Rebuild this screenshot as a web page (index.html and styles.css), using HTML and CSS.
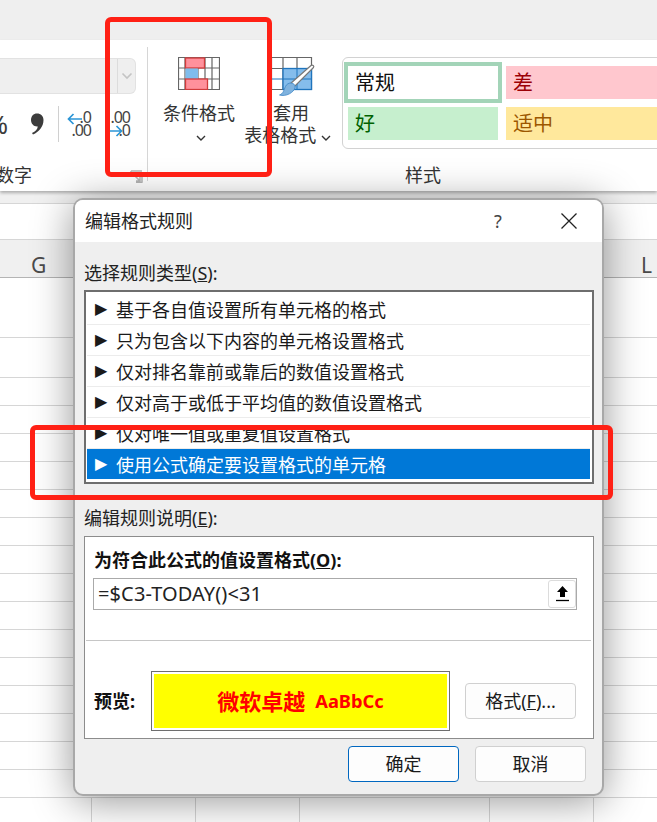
FILE: index.html
```html
<!DOCTYPE html>
<html lang="zh-CN">
<head>
<meta charset="utf-8">
<title>编辑格式规则</title>
<link rel="stylesheet" href="styles.css">
</head>
<body>
<main class="app">
  <div class="topband"></div>
  <section class="ribbon">
    <div class="group-number">
      <div class="combo">
        <span class="combo-arrow">
          <svg width="12" height="8" viewBox="0 0 12 8"><path d="M1.5 1.5 6 6l4.5-4.5" fill="none" stroke="#c4c4c4" stroke-width="1.6"/></svg>
        </span>
      </div>
      <div class="tools">
        <span class="percent">%</span>
        <svg class="comma" width="14" height="22" viewBox="0 0 14 22"><path d="M7 0.5C10.8 0.5 13.5 3 13.5 7c0 6.5-4.5 12-10.500 14.500l-1-1.500C5.500 18.500 7.500 16 7.800 13.400 4 13.800 1 11 1 7 1 3.200 3.500 0.500 7 0.500Z" fill="#3c3c3c"/></svg>
        <span class="tool-sep"></span>
        <span class="dec dec-left">
          <span class="dec-line">.0</span><span class="dec-line">.00</span>
          <svg class="dec-arrow" width="15" height="12" viewBox="0 0 15 12"><path d="M15 6H2M6.500 1 1.500 6l5 5" fill="none" stroke="#2b95d6" stroke-width="1.700"/></svg>
        </span>
        <span class="dec dec-right">
          <span class="dec-line">.00</span><span class="dec-line">.0</span>
          <svg class="dec-arrow" width="13" height="12" viewBox="0 0 13 12"><path d="M0 6h11M6.500 1l5 5-5 5" fill="none" stroke="#2b95d6" stroke-width="1.700"/></svg>
        </span>
      </div>
      <div class="group-label-clip"><span class="group-label">数字</span></div>
      <svg class="launcher" width="13" height="13" viewBox="0 0 13 13"><path d="M1 1h11M1 1v5M12 6v6.500M6 12.500h6.500M3 4l7 7M10 7v4H6" fill="none" stroke="#b4b4b4" stroke-width="1.500"/></svg>
    </div>

    <div class="big-btn btn-cond">
      <svg class="cond-icon" width="42" height="33" viewBox="0 0 42 33">
        <path d="M.5.5h41v32H.5zM.5 11h41M.5 22h41M7 0v33M20 0v33M27 0v33M34 0v33" fill="#fff" stroke="#666" stroke-width="1.200"/>
        <rect x="7.500" y="1" width="19" height="10" fill="#ff919c" stroke="#d13c3c" stroke-width="1.300"/>
        <rect x="7.500" y="11.500" width="12.500" height="10.500" fill="#7fbcec"/>
        <rect x="7.500" y="22" width="22" height="10.500" fill="#ff919c" stroke="#d13c3c" stroke-width="1.300"/>
      </svg>
      <span class="btn-line">条件格式</span>
      <span class="btn-line btn-line-chevron">
        <svg width="10" height="7" viewBox="0 0 10 7"><path d="M1 1l4 4 4-4" fill="none" stroke="#333" stroke-width="1.400"/></svg>
      </span>
    </div>

    <div class="big-btn btn-table">
      <svg class="table-icon" width="46" height="42" viewBox="0 0 46 42">
        <path d="M1.500.5h40v32h-40zM1.500 11.500h40M13 0v33M27 0v33" fill="#fff" stroke="#666" stroke-width="1.200"/>
        <rect x="13" y="11.500" width="28.500" height="21" fill="#85bdec" stroke="#1f74bd" stroke-width="1.300"/>
        <path d="M1.500 22h11.500M27 11.500v21M13 22h28" fill="none" stroke="#1f74bd" stroke-width="1"/>
        <path d="M43.500 10.500 24 30l-3.500-3.500L41 8.500c1.500-1 3.500.5 2.500 2Z" fill="#fff" stroke="#777" stroke-width="1.200"/>
        <path d="M21 26c3 .5 4.500 2 4 4.500-1 5-9 9.500-15.500 7.500 4-1.500 4-4.500 6-8.500 1-2.500 3.500-3.500 5.500-3.500Z" fill="#7fb2de" stroke="#3d86c6" stroke-width=".8"/>
      </svg>
      <span class="btn-line">套用</span>
      <span class="btn-line btn-line-wide">表格格式
        <svg width="10" height="7" viewBox="0 0 10 7"><path d="M1 1l4 4 4-4" fill="none" stroke="#333" stroke-width="1.400"/></svg>
      </span>
    </div>

    <div class="group-styles">
      <div class="gallery">
        <div class="style style-normal">常规</div>
        <div class="style style-bad">差</div>
        <div class="style style-good">好</div>
        <div class="style style-neutral">适中</div>
      </div>
      <div class="styles-label">样式</div>
    </div>
  </section>

  <section class="sheet">
    <div class="row row-a"></div>
    <div class="row row-b"></div>
    <div class="row row-head"><span>G</span><span>L</span></div>
    <div class="row row-c"></div>
    <div class="row row-d"></div>
    <div class="row"></div><div class="row"></div><div class="row"></div><div class="row"></div><div class="row"></div>
    <div class="row"></div><div class="row"></div><div class="row"></div><div class="row"></div><div class="row"></div>
    <div class="row"></div><div class="row"></div><div class="row"></div><div class="row"></div><div class="row"></div>
    <div class="cols">
      <span class="col col-std"></span><span class="col col-std"></span><span class="col col-wide"></span><span class="col col-std"></span><span class="col col-std"></span>
    </div>
  </section>

  <section class="dialog">
    <header class="titlebar">
      <span class="title">编辑格式规则</span>
      <span class="help">?</span>
      <svg class="close" width="16" height="16" viewBox="0 0 16 16"><path d="M.5.5l15 15M15.500.5l-15 15" fill="none" stroke="#222" stroke-width="1.300"/></svg>
    </header>
    <div class="dialog-body">
      <div class="field-label first">选择规则类型(<u>S</u>):</div>
      <ul class="rules">
        <li class="rule"><span class="tri">▶</span>基于各自值设置所有单元格的格式</li>
        <li class="rule"><span class="tri">▶</span>只为包含以下内容的单元格设置格式</li>
        <li class="rule"><span class="tri">▶</span>仅对排名靠前或靠后的数值设置格式</li>
        <li class="rule"><span class="tri">▶</span>仅对高于或低于平均值的数值设置格式</li>
        <li class="rule"><span class="tri">▶</span>仅对唯一值或重复值设置格式</li>
        <li class="rule selected"><span class="tri">▶</span>使用公式确定要设置格式的单元格</li>
      </ul>
      <div class="field-label second">编辑规则说明(<u>E</u>):</div>
      <div class="panel">
        <div class="panel-title">为符合此公式的值设置格式(<u>O</u>):</div>
        <div class="formula">
          <span class="formula-text">=$C3-TODAY()&lt;31</span>
          <span class="picker">
            <svg width="15" height="16" viewBox="0 0 15 16"><path d="M7.500 0 13 6H10v5H5V6H2Z" fill="#000"/><path d="M1 14.500h13" stroke="#000" stroke-width="1.300"/></svg>
          </span>
        </div>
        <div class="divider"></div>
        <div class="preview-row">
          <span class="preview-label">预览:</span>
          <div class="preview-box">
            <div class="preview-fill"><span class="preview-cn">微软卓越</span><span class="preview-en">AaBbCc</span></div>
          </div>
          <button class="btn btn-format">格式(<u>F</u>)...</button>
        </div>
      </div>
      <div class="footer">
        <button class="btn btn-ok">确定</button>
        <button class="btn">取消</button>
      </div>
    </div>
  </section>

  <div class="mark mark-ribbon"></div>
  <div class="mark mark-rule"></div>
</main>
</body>
</html>
```
FILE: styles.css
```css
* { box-sizing: border-box; }
html, body { margin: 0; padding: 0; }
body {
  font-family: "Noto Sans", "Noto Sans CJK SC", sans-serif;
  font-size: 18px;
  color: #1a1a1a;
  background: #fff;
}
.app { position: relative; width: 657px; height: 822px; overflow: hidden; }
.topband { height: 40px; background: #efefef; }

/* ribbon */
.ribbon {
  position: relative;
  z-index: 1;
  height: 151px;
  display: flex;
  align-items: flex-start;
  background: #fff;
  box-shadow: 0 2px 3px rgba(0, 0, 0, .28);
}
.group-number {
  position: relative;
  flex: none;
  width: 148px;
  height: 134px;
  margin-top: 7px;
  border-right: 1px solid #d6d6d6;
  display: flex;
  flex-direction: column;
}
.combo {
  flex: none;
  width: 136px;
  height: 36px;
  margin-top: 11px;
  background: #efefef;
  border: 1px solid #e2e2e2;
  border-left: 0;
  border-radius: 0 6px 6px 0;
  display: flex;
  justify-content: flex-end;
}
.combo-arrow {
  width: 18px;
  border-left: 1px solid #dcdcdc;
  display: flex;
  align-items: center;
  justify-content: center;
}
.tools {
  flex: none;
  display: flex;
  align-items: center;
  height: 36px;
  margin-top: 12px;
}
.percent { flex: none; width: 32px; margin: 0 22px 0 -24px; font-size: 26px; line-height: 36px; color: #3c3c3c; text-align: right; }
.comma { flex: none; }
.tool-sep { width: 1px; height: 36px; background: #d0d0d0; margin-left: 14px; }
.dec {
  position: relative;
  display: flex;
  flex-direction: column;
  align-items: flex-end;
  font-size: 16px;
  line-height: 13px;
  letter-spacing: -1px;
  color: #444;
}
.dec-left { width: 27px; margin-left: 5px; }
.dec-right { width: 26px; margin-left: 13px; }
.dec-line { display: block; }
.dec-arrow { position: absolute; left: 3px; top: 2px; }
.dec-right .dec-arrow { left: 6px; top: 14px; }
.group-label-clip {
  flex: none;
  width: 32px;
  height: 26px;
  margin-top: 20px;
  display: flex;
  justify-content: flex-end;
  overflow: hidden;
}
.group-label { flex: none; line-height: 26px; color: #333; }
.launcher { position: absolute; left: 130px; top: 123px; }

.big-btn {
  flex: none;
  padding-top: 17px;
  display: flex;
  flex-direction: column;
  align-items: center;
}
.btn-cond { width: 98px; margin-left: 2px; }
.btn-table { width: 92px; margin-left: -3px; }
.cond-icon { display: block; margin-bottom: 12px; }
.table-icon { display: block; align-self: flex-start; margin: 0 0 3px 25px; }
.btn-line { display: block; height: 22px; line-height: 22px; color: #333; white-space: nowrap; }
.btn-line-chevron { margin-left: 4px; }
.btn-line-wide { margin-left: -7px; }

/* styles gallery */
.group-styles { flex: none; width: 320px; margin-left: 5px; padding-top: 17px; }
.gallery {
  height: 92px;
  width: 330px;
  border: 1px solid #d2d2d2;
  border-radius: 6px;
  background: #fff;
  padding: 4px 0 0 1px;
  display: grid;
  grid-template-columns: 158px 160px;
  grid-template-rows: 41px 33px;
  column-gap: 4px;
  row-gap: 4px;
  font-size: 20px;
  line-height: 33px;
}
.style { padding-left: 7px; }
.style-normal { border: 4px solid #a3d4b8; padding-left: 7px; color: #111; background: #fff; }
.style-bad { margin: 4px 0; background: #ffc7ce; color: #9c0006; }
.style-good { margin: 0 4px; background: #c6efce; color: #006100; }
.style-neutral { background: #ffe89c; color: #9c5700; }
.styles-label { margin: 14px 0 0 63px; line-height: 24px; color: #333; }

/* sheet */
.row { height: 28px; border-bottom: 1px solid #d6d6d6; background: #fff; }
.row-a { height: 13px; background: #f0f0f0; }
.row-b { height: 36px; }
.row-head {
  height: 38px;
  background: #f0f0f0;
  border-bottom-color: #b4b4b4;
  display: flex;
  justify-content: space-between;
  padding: 0 5px 0 31px;
  font-size: 21px;
  line-height: 50px;
  color: #4a4a4a;
}
.row-c { height: 60px; }
.row-d { height: 40px; }
.cols { display: flex; height: 24px; padding-left: 91px; }
.col { flex: none; height: 100%; border-left: 1px solid #d6d6d6; }
.col-std { width: 104px; }
.col-wide { width: 190px; }

/* dialog */
.dialog {
  position: absolute;
  z-index: 2;
  left: 73px;
  top: 198px;
  width: 531px;
  height: 598px;
  border: 2px solid #a8a8a8;
  border-radius: 10px;
  background: #efefef;
  box-shadow: 0 5px 40px rgba(0, 0, 0, .42);
  overflow: hidden;
}
.titlebar {
  height: 42px;
  background: #fff;
  display: flex;
  align-items: center;
  padding: 0 25px 0 10px;
}
.title { line-height: 24px; color: #222; }
.help { width: 20px; margin-left: auto; text-align: center; color: #444; line-height: 24px; }
.close { margin-left: 53px; flex: none; }
.dialog-body { padding: 0 8px 0 9px; }
.field-label { line-height: 24px; height: 24px; color: #222; }
.first { margin-top: 19px; }
.second { margin-top: 22px; }
.rules {
  list-style: none;
  margin: 5px 0 0;
  padding: 2px 2px 0 1px;
  height: 194px;
  background: #fff;
  border: 2px solid #6e6e6e;
}
.rule {
  height: 31px;
  line-height: 32px;
  border-bottom: 1px solid #ececec;
  padding-left: 8px;
  color: #1a1a1a;
  white-space: nowrap;
  display: flex;
}
.tri { flex: none; width: 21px; font-family: "DejaVu Sans", sans-serif; font-size: 16px; line-height: 30px; }
.selected { background: #0078d7; color: #fff; border-bottom: 0; height: 30px; }
.panel {
  height: 203px;
  margin-top: 6px;
  background: #fff;
  border: 1px solid #8c8c8c;
}
.panel-title { margin: 11px 0 0 9px; line-height: 24px; font-weight: 700; color: #111; }
.formula {
  width: 484px;
  height: 32px;
  margin: 6px 0 0 8px;
  border: 1px solid #aaa;
  display: flex;
  align-items: center;
  padding-left: 4px;
}
.formula-text { flex: 1; font-size: 20px; letter-spacing: .12px; line-height: 30px; color: #222; }
.picker {
  width: 28px;
  height: 28px;
  border: 1px solid #dcdcdc;
  border-radius: 3px;
  display: flex;
  align-items: center;
  justify-content: center;
}
.divider { height: 1px; margin: 30px 2px 0 1px; background: #c6c6c6; }
.preview-row { display: flex; align-items: center; margin-top: 30px; }
.preview-label { width: 57px; margin-left: 9px; flex: none; font-weight: 700; color: #111; line-height: 24px; white-space: nowrap; }
.preview-box {
  width: 299px;
  height: 60px;
  flex: none;
  padding: 2px;
  background: #fff;
  border: 1px solid #6e6e6e;
}
.preview-fill {
  height: 100%;
  background: #ff0;
  color: #f00;
  font-weight: 700;
  display: flex;
  align-items: center;
  justify-content: center;
  gap: 10px;
}
.preview-cn { font-size: 22px; line-height: 30px; }
.preview-en { font-size: 18.3px; line-height: 30px; }
.btn {
  width: 111px;
  height: 36px;
  padding: 0;
  background: #fdfdfd;
  border: 1px solid #d0d0d0;
  border-radius: 4px;
  font: inherit;
  line-height: 24px;
  color: #1a1a1a;
}
.btn-format { margin-left: 15px; flex: none; }
.footer { display: flex; justify-content: flex-end; gap: 16px; margin: 7px 8px 0 0; }
.btn-ok { border-color: #0067c0; }

/* red annotations */
.mark {
  position: absolute;
  z-index: 3;
  border: 5px solid #ff2015;
  border-radius: 6px;
}
.mark-ribbon { left: 105px; top: 17px; width: 167px; height: 160px; }
.mark-rule { left: 30px; top: 425px; width: 583px; height: 75px; }
```
